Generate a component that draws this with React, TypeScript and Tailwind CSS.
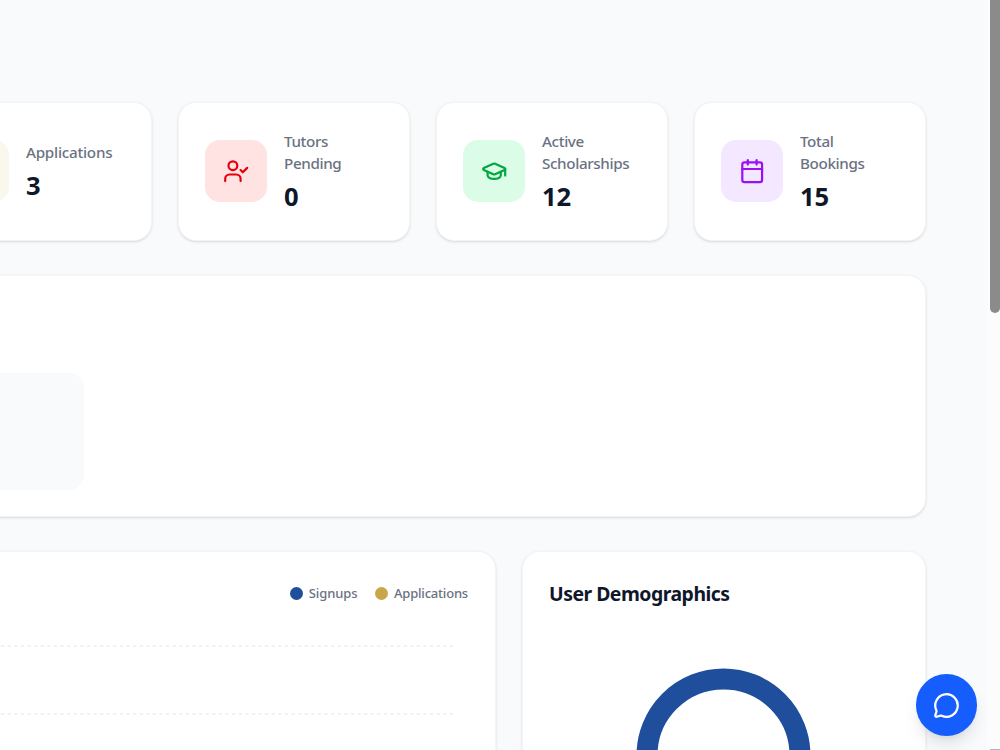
import type { ReactNode } from "react";
import { Calendar, GraduationCap, MessageCircle, UserCheck } from "lucide-react";

const card = "rounded-[18px] border border-gray-100 bg-white shadow-[0_1px_3px_rgba(0,0,0,0.1),0_1px_2px_-1px_rgba(0,0,0,0.1)]";

function Stat({ icon, tint, label, value }: { icon?: ReactNode; tint: string; label: ReactNode; value: string }) {
  return (
    <div className={`${card} flex h-[138.6px] w-[232px] shrink-0 items-center gap-[17.4px] px-[26px]`}>
      <div className={`relative -top-[0.5px] flex size-[61.6px] shrink-0 items-center justify-center rounded-[15px] ${tint}`}>{icon}</div>
      <div className="-mt-[3px] whitespace-nowrap">
        <p className="text-[15.2px] leading-[22px] font-medium tracking-[-0.36px] text-gray-500">{label}</p>
        <p className="relative top-[4.7px] text-[25.6px] leading-[35px] font-bold text-slate-900">{value}</p>
      </div>
    </div>
  );
}

export default function App() {
  return (
    <div className="relative h-[750px] w-[1000px] overflow-hidden bg-[#f9fafc] font-['Noto_Sans',sans-serif]">
      <main className="-ml-[80px] flex w-[1006px] flex-col gap-[34px] pt-[102px]">
        <div className="flex h-[139px] gap-[26px]">
          <Stat tint="bg-[#faf7ed]" label={<span className="tracking-[-0.24px]">Applications</span>} value="3" />
          <Stat
            tint="bg-red-100"
            icon={<UserCheck className="size-[26.4px] text-red-600" />}
            label={<>Tutors<br />Pending</>}
            value="0"
          />
          <Stat
            tint="bg-green-100"
            icon={<GraduationCap className="size-[26.4px] text-green-600" />}
            label={<>Active<br />Scholarships</>}
            value="12"
          />
          <Stat
            tint="bg-purple-100"
            icon={<Calendar className="size-[26.4px] text-purple-600" />}
            label={<>Total<br />Bookings</>}
            value="15"
          />
        </div>
        <section className={`${card} h-[242px] pt-[97px]`}>
          <div className="h-[117px] w-[163px] rounded-r-[15px] border border-[#f7f9fb] bg-[#f9fafc]" />
        </section>
        <div className="flex gap-[26px]">
          <section className={`${card} h-[450px] w-[576px] pt-[29px]`}>
            <div className="flex justify-end gap-[17.6px] pr-[27px] text-[13px] leading-[24px] font-medium tracking-[-0.2px] text-gray-500">
              <span className="flex items-center gap-[6px]">
                <i className="size-[13px] rounded-full bg-[#1e4e9c]" />
                <span className="tracking-[-0.1px]">Signups</span>
              </span>
              <span className="flex items-center gap-[6px]">
                <i className="size-[13px] rounded-full bg-[#c9a748]" />
                <span>Applications</span>
              </span>
            </div>
            <svg className="mt-[31px] block h-[120px] w-[534px]" viewBox="0 0 534 120" fill="none">
              <path d="M0.8 10H532.6M0.8 78H532.6" stroke="#eeeeee" strokeWidth="1.3" strokeDasharray="3.3 3.3" />
            </svg>
          </section>
          <section className={`${card} h-[450px] w-[404px] pt-[26px]`}>
            <h2 className="pl-[26px] text-[19.4px] leading-[31px] font-bold tracking-[-0.5px] text-slate-900">User Demographics</h2>
            <svg className="mt-[50px] ml-[104px] block size-[194px]" viewBox="0 0 194 194" fill="none">
              <circle cx="96.5" cy="96.5" r="76.5" stroke="#1e4e9c" strokeWidth="21" />
            </svg>
          </section>
        </div>
      </main>
      <div className="absolute top-0 right-0 flex h-full w-[13px] flex-col items-end justify-between bg-[#fcfcfc]">
        <div className="h-[313px] w-[10px] rounded-b-[5px] bg-[#8b8b8b]" />
        <div className="h-px w-[10px] bg-[#b5b5b5]" />
      </div>
      <button className="absolute top-[674.4px] left-[915.8px] flex size-[61.6px] items-center justify-center rounded-full bg-[#155dfc] text-white shadow-[0_11px_17px_-3px_rgba(0,0,0,0.1),0_4px_7px_-4px_rgba(0,0,0,0.1)]">
        <MessageCircle className="size-[27px]" />
      </button>
    </div>
  );
}
